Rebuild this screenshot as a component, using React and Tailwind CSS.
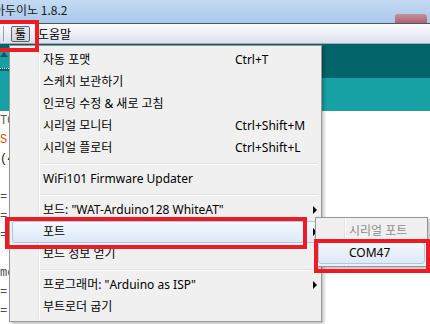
import React from "react";

const items = [
  { t: "자동 포맷", k: "Ctrl+T" },
  { t: "스케치 보관하기" },
  { t: "인코딩 수정 & 새로 고침" },
  { t: "시리얼 모니터", k: "Ctrl+Shift+M" },
  { t: "시리얼 플로터", k: "Ctrl+Shift+L" },
  "sep",
  { t: "WiFi101 Firmware Updater" },
  "sep",
  { t: ' 보드: "WAT-Arduino128 WhiteAT"', arrow: true },
  { t: "포트", arrow: true, hl: true },
  { t: "보드 정보 얻기" },
  "sep",
  { t: '프로그래머: "Arduino as ISP"', arrow: true },
  { t: "부트로더 굽기" },
];

const codeLines = [
  { t: "TO", c: "text-[#555d61]" },
  { t: "S'", c: "text-[#d35400]" },
  { t: "(4", c: "text-[#1c1c1c]" },
  { t: "", c: "" },
  { t: "=", c: "text-[#434f54]" },
  { t: "=", c: "text-[#434f54]" },
  { t: "=", c: "text-[#434f54]" },
  { t: "", c: "" },
  { t: "me", c: "text-[#434f54]" },
  { t: "=", c: "text-[#434f54]" },
  { t: "=", c: "text-[#434f54]" },
];

function Arrow() {
  return (
    <span className="ml-auto mr-[1px] h-0 w-0 border-y-[4px] border-l-[4px] border-y-transparent border-l-black" />
  );
}

export default function App() {
  return (
    <div className="relative flex h-[324px] w-[430px] flex-col overflow-hidden bg-white font-['Noto_Sans','Noto_Sans_CJK_KR',sans-serif] text-[12px] text-black">
      {/* title bar */}
      <div className="relative h-[23px] shrink-0 bg-gradient-to-b from-[#c4dbf2] to-[#a9c8ea]">
        <div className="absolute left-[-6px] top-[2px] whitespace-nowrap font-['Noto_Sans_CJK_KR',sans-serif] text-[12px] leading-[16px] text-[#1a1a1a]">
          아두이노 1.8.2
        </div>
        <div className="absolute bottom-0 left-[395px] h-[9px] w-[32px] rounded-t-[3px] bg-gradient-to-b from-[#c98088] to-[#b04a55] opacity-80" />
      </div>
      <div className="h-px shrink-0 bg-[#4a5662]" />
      {/* menu bar */}
      <div className="flex h-[20px] shrink-0 items-center border-b border-[#a7abb5] bg-gradient-to-b from-[#fbfcfe] via-[#eef0f7] to-[#dce1ee]">
        <span className="ml-[3px] h-[15px] w-px bg-[#9aa0aa]" />
        <div className="ml-[7px] flex h-[16px] w-[19px] items-center justify-center rounded-[2px] border border-[#5f6368] bg-gradient-to-b from-[#e4e7ee] to-[#cfd4de] font-['Noto_Sans_CJK_KR',sans-serif] leading-none">
          툴
        </div>
        <div className="ml-[8px] font-['Noto_Sans_CJK_KR',sans-serif] leading-none">도움말</div>
      </div>
      {/* toolbar */}
      <div className="flex h-[34px] shrink-0 bg-[#006468]">
        <div className="flex w-[9px] flex-col">
          <div className="h-[4px] bg-[#006468]" />
          <div className="relative h-[20px] bg-[#17a1a5]">
            <span className="absolute left-[0px] top-[4px] h-0 w-0 border-x-[4px] border-b-[5px] border-x-transparent border-b-[#00575b]" />
          </div>
          <div className="h-[3px] border-t border-dotted border-white bg-[#006468]" />
          <div className="flex-1 bg-[#17a1a5]" />
        </div>
      </div>
      {/* tab bar */}
      <div className="h-[33px] shrink-0 bg-[#17a1a5]" />
      {/* editor */}
      <div className="flex-1 font-['Liberation_Mono',monospace] text-[12px]">
        {codeLines.map((l, i) => (
          <div key={i} className={`flex h-[19px] items-center whitespace-nowrap ${l.c}`}>
            {l.t}
          </div>
        ))}
      </div>

      {/* dropdown menu */}
      <div className="absolute left-[9px] top-[45px] w-[313px] border border-[#979797] bg-[#f0f0f0] px-[2px] py-[3px] shadow-[2px_2px_3px_rgba(0,0,0,0.25)]">
        <div className="absolute bottom-0 left-[28px] top-0 w-px bg-[#e2e3e3]" />
        <div className="absolute bottom-0 left-[29px] top-0 w-px bg-white" />
        <div className="relative flex flex-col">
          {items.map((it, i) =>
            it === "sep" ? (
              <div key={i} className="flex h-[9px] items-center pl-[29px] pr-[1px]">
                <div className="h-[2px] w-full border-b border-t border-b-white border-t-[#e0e0e0]" />
              </div>
            ) : (
              <div
                key={i}
                className={`flex h-[22px] items-center whitespace-nowrap rounded-[3px] border pl-[30px] ${
                  it.hl
                    ? "border-[#a9c8ee] bg-gradient-to-b from-[#f4f8fe] to-[#dde8f7]"
                    : "border-transparent"
                }`}
              >
                <span className="w-[192px] shrink-0 leading-none">{it.t.trim()}</span>
                {it.k && <span className="leading-none">{it.k}</span>}
                {it.arrow && <Arrow />}
              </div>
            )
          )}
        </div>
      </div>

      {/* submenu */}
      <div className="absolute left-[315px] top-[217px] w-[113px] border border-[#979797] bg-[#f0f0f0] p-[2px] shadow-[2px_2px_3px_rgba(0,0,0,0.25)]">
        <div className="absolute bottom-0 left-[28px] top-0 w-px bg-[#e2e3e3]" />
        <div className="absolute bottom-0 left-[29px] top-0 w-px bg-white" />
        <div className="relative flex flex-col">
          <div className="flex h-[22px] items-center rounded-[3px] border border-transparent pl-[30px] leading-none text-[#8d8d8d]">
            시리얼 포트
          </div>
          <div className="flex h-[22px] items-center rounded-[3px] border border-[#a9c8ee] bg-gradient-to-b from-[#f4f8fe] to-[#dde8f7] pl-[30px] leading-none">
            COM47
          </div>
        </div>
      </div>

      {/* red annotation boxes */}
      <div className="absolute left-[-5px] top-[20px] h-[32px] w-[44px] border-4 border-[#ed1c24]" />
      <div className="absolute left-[5px] top-[217px] h-[32px] w-[302px] border-4 border-[#ed1c24]" />
      <div className="absolute left-[314px] top-[239px] h-[34px] w-[116px] border-4 border-[#ed1c24]" />
    </div>
  );
}
